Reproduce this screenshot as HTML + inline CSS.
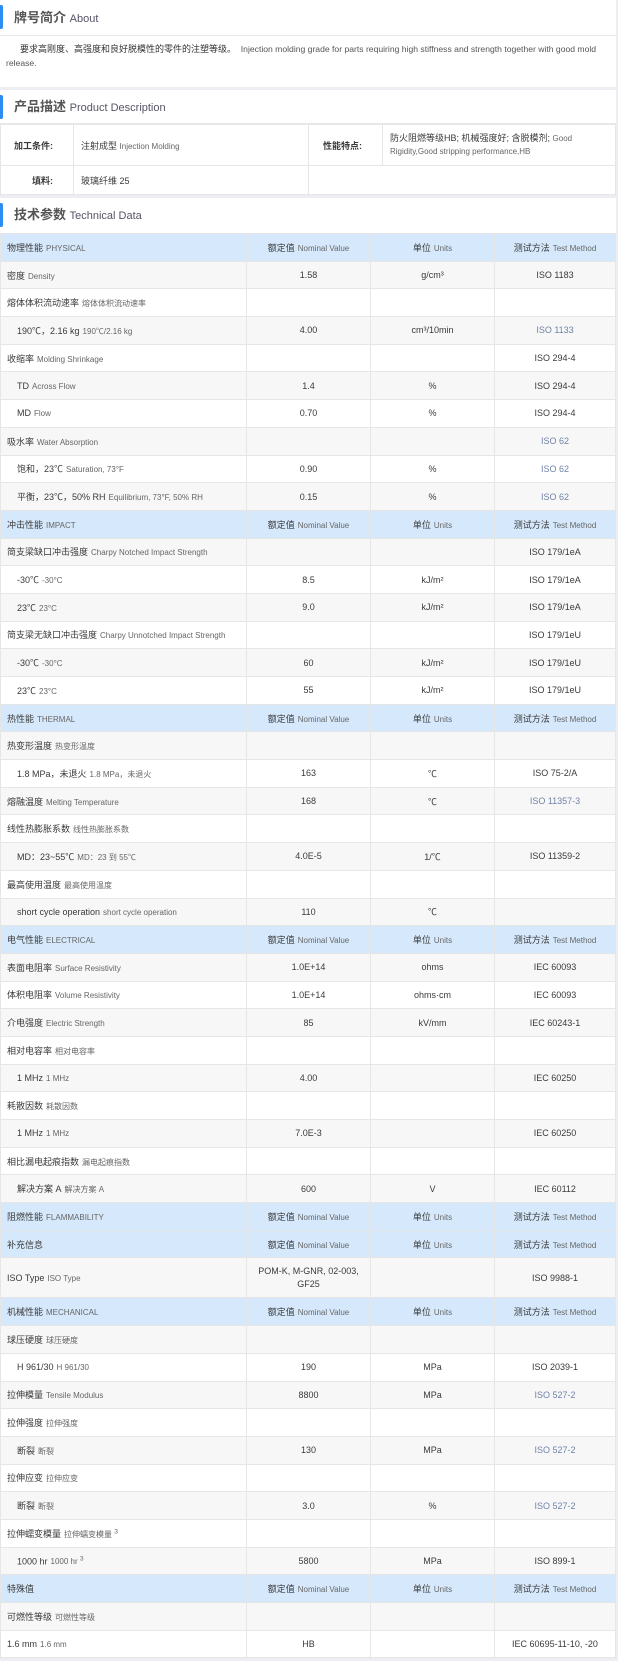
<!DOCTYPE html>
<html><head><meta charset="utf-8">
<style>
*{margin:0;padding:0;box-sizing:border-box}
body{width:618px;height:1661px;background:#eceef1;font-family:"Liberation Sans","Noto Sans CJK SC",sans-serif;color:#333;overflow:hidden}
.box{background:#fff;border-right:2px solid #eceef1}
.h{position:relative;height:36px;border-bottom:1px solid #e8e8e8;padding-left:14px;line-height:35px;font-size:13px;font-weight:bold;color:#555;background:#fff}
.h:before{content:"";position:absolute;left:0;top:5px;width:3px;height:24px;background:#2d8cf0;border-radius:0 2px 2px 0}
.h small{font-size:11px;font-weight:normal;color:#556;}
.about{height:51px;padding:6px 6px 0 6px;font-size:8.6px;line-height:14px;color:#555;text-indent:14px}
.about b{font-weight:normal;color:#333;font-size:9px}
table{border-collapse:collapse;width:616px;table-layout:fixed;background:#fff}
td{border:1px solid #e6e6e6;font-size:9px;color:#3a3a3a;vertical-align:middle}
.d td{font-size:9px}
.d .l{text-align:right;padding-right:20px;font-weight:bold}
.d .v{padding-left:7px}
.d span{color:#666;font-size:8px}
.t tr{height:27.7px}
.t td{text-align:center;padding:0 3px}
.t td:first-child{text-align:left;padding-left:6px}
.t tr.g td{background:#f7f7f7}
.t tr.hd td{background:#d6e9fc}
.t span{color:#666;font-size:8px;margin-left:3px}
.t td.s{padding-left:16px}
.t .lk{color:#7183a8}
.gap{height:3px;background:#eceef1}
</style></head><body>
<div class="box">
<div class="h">牌号简介 <small>About</small></div>
<div class="about"><b>要求高刚度、高强度和良好脱模性的零件的注塑等级。</b>&nbsp; Injection molding grade for parts requiring high stiffness and strength together with good mold release.</div>
</div>
<div class="gap"></div>
<div class="box">
<div class="h" style="height:34px;line-height:33px">产品描述 <small>Product Description</small></div>
<table class="d">
<colgroup><col style="width:73px"><col style="width:235px"><col style="width:74px"><col></colgroup>
<tr style="height:41px"><td class="l">加工条件:</td><td class="v">注射成型 <span>Injection Molding</span></td><td class="l">性能特点:</td><td class="v" style="line-height:13px">防火阻燃等级HB; 机械强度好; 含脱模剂; <span>Good Rigidity,Good stripping performance,HB</span></td></tr>
<tr style="height:29px"><td class="l">填料:</td><td class="v">玻璃纤维 25</td><td colspan="2"></td></tr>
</table>
</div>
<div class="gap"></div>
<div class="box">
<div class="h" style="height:35px;line-height:34px;border-bottom:none">技术参数 <small>Technical Data</small></div>
<table class="t">
<colgroup><col style="width:246px"><col style="width:124px"><col style="width:124px"><col></colgroup>
<tr class="hd"><td>物理性能<span>PHYSICAL</span></td><td>额定值<span>Nominal Value</span></td><td>单位<span>Units</span></td><td>测试方法<span>Test Method</span></td></tr>
<tr class="g"><td>密度<span>Density</span></td><td>1.58</td><td>g/cm³</td><td>ISO 1183</td></tr>
<tr><td>熔体体积流动速率<span>熔体体积流动速率</span></td><td></td><td></td><td></td></tr>
<tr class="g"><td class="s">190℃，2.16 kg<span>190℃/2.16 kg</span></td><td>4.00</td><td>cm³/10min</td><td class="lk">ISO 1133</td></tr>
<tr><td>收缩率<span>Molding Shrinkage</span></td><td></td><td></td><td>ISO 294-4</td></tr>
<tr class="g"><td class="s">TD<span>Across Flow</span></td><td>1.4</td><td>%</td><td>ISO 294-4</td></tr>
<tr><td class="s">MD<span>Flow</span></td><td>0.70</td><td>%</td><td>ISO 294-4</td></tr>
<tr class="g"><td>吸水率<span>Water Absorption</span></td><td></td><td></td><td class="lk">ISO 62</td></tr>
<tr><td class="s">饱和，23℃<span>Saturation, 73°F</span></td><td>0.90</td><td>%</td><td class="lk">ISO 62</td></tr>
<tr class="g"><td class="s">平衡，23℃，50% RH<span>Equilibrium, 73°F, 50% RH</span></td><td>0.15</td><td>%</td><td class="lk">ISO 62</td></tr>
<tr class="hd"><td>冲击性能<span>IMPACT</span></td><td>额定值<span>Nominal Value</span></td><td>单位<span>Units</span></td><td>测试方法<span>Test Method</span></td></tr>
<tr class="g"><td>简支梁缺口冲击强度<span>Charpy Notched Impact Strength</span></td><td></td><td></td><td>ISO 179/1eA</td></tr>
<tr><td class="s">-30℃<span>-30°C</span></td><td>8.5</td><td>kJ/m²</td><td>ISO 179/1eA</td></tr>
<tr class="g"><td class="s">23℃<span>23°C</span></td><td>9.0</td><td>kJ/m²</td><td>ISO 179/1eA</td></tr>
<tr><td>简支梁无缺口冲击强度<span>Charpy Unnotched Impact Strength</span></td><td></td><td></td><td>ISO 179/1eU</td></tr>
<tr class="g"><td class="s">-30℃<span>-30°C</span></td><td>60</td><td>kJ/m²</td><td>ISO 179/1eU</td></tr>
<tr><td class="s">23℃<span>23°C</span></td><td>55</td><td>kJ/m²</td><td>ISO 179/1eU</td></tr>
<tr class="hd"><td>热性能<span>THERMAL</span></td><td>额定值<span>Nominal Value</span></td><td>单位<span>Units</span></td><td>测试方法<span>Test Method</span></td></tr>
<tr class="g"><td>热变形温度<span>热变形温度</span></td><td></td><td></td><td></td></tr>
<tr><td class="s">1.8 MPa，未退火<span>1.8 MPa，未退火</span></td><td>163</td><td>℃</td><td>ISO 75-2/A</td></tr>
<tr class="g"><td>熔融温度<span>Melting Temperature</span></td><td>168</td><td>℃</td><td class="lk">ISO 11357-3</td></tr>
<tr><td>线性热膨胀系数<span>线性热膨胀系数</span></td><td></td><td></td><td></td></tr>
<tr class="g"><td class="s">MD：23~55℃<span>MD：23 到 55℃</span></td><td>4.0E-5</td><td>1/℃</td><td>ISO 11359-2</td></tr>
<tr><td>最高使用温度<span>最高使用温度</span></td><td></td><td></td><td></td></tr>
<tr class="g"><td class="s">short cycle operation<span>short cycle operation</span></td><td>110</td><td>℃</td><td></td></tr>
<tr class="hd"><td>电气性能<span>ELECTRICAL</span></td><td>额定值<span>Nominal Value</span></td><td>单位<span>Units</span></td><td>测试方法<span>Test Method</span></td></tr>
<tr class="g"><td>表面电阻率<span>Surface Resistivity</span></td><td>1.0E+14</td><td>ohms</td><td>IEC 60093</td></tr>
<tr><td>体积电阻率<span>Volume Resistivity</span></td><td>1.0E+14</td><td>ohms·cm</td><td>IEC 60093</td></tr>
<tr class="g"><td>介电强度<span>Electric Strength</span></td><td>85</td><td>kV/mm</td><td>IEC 60243-1</td></tr>
<tr><td>相对电容率<span>相对电容率</span></td><td></td><td></td><td></td></tr>
<tr class="g"><td class="s">1 MHz<span>1 MHz</span></td><td>4.00</td><td></td><td>IEC 60250</td></tr>
<tr><td>耗散因数<span>耗散因数</span></td><td></td><td></td><td></td></tr>
<tr class="g"><td class="s">1 MHz<span>1 MHz</span></td><td>7.0E-3</td><td></td><td>IEC 60250</td></tr>
<tr><td>相比漏电起痕指数<span>漏电起痕指数</span></td><td></td><td></td><td></td></tr>
<tr class="g"><td class="s">解决方案 A<span>解决方案 A</span></td><td>600</td><td>V</td><td>IEC 60112</td></tr>
<tr class="hd"><td>阻燃性能<span>FLAMMABILITY</span></td><td>额定值<span>Nominal Value</span></td><td>单位<span>Units</span></td><td>测试方法<span>Test Method</span></td></tr>
<tr class="hd"><td>补充信息</td><td>额定值<span>Nominal Value</span></td><td>单位<span>Units</span></td><td>测试方法<span>Test Method</span></td></tr>
<tr class="g" style="height:40px"><td>ISO Type<span>ISO Type</span></td><td style="line-height:13px">POM-K, M-GNR, 02-003, GF25</td><td></td><td>ISO 9988-1</td></tr>
<tr class="hd"><td>机械性能<span>MECHANICAL</span></td><td>额定值<span>Nominal Value</span></td><td>单位<span>Units</span></td><td>测试方法<span>Test Method</span></td></tr>
<tr class="g"><td>球压硬度<span>球压硬度</span></td><td></td><td></td><td></td></tr>
<tr><td class="s">H 961/30<span>H 961/30</span></td><td>190</td><td>MPa</td><td>ISO 2039-1</td></tr>
<tr class="g"><td>拉伸模量<span>Tensile Modulus</span></td><td>8800</td><td>MPa</td><td class="lk">ISO 527-2</td></tr>
<tr><td>拉伸强度<span>拉伸强度</span></td><td></td><td></td><td></td></tr>
<tr class="g"><td class="s">断裂<span>断裂</span></td><td>130</td><td>MPa</td><td class="lk">ISO 527-2</td></tr>
<tr><td>拉伸应变<span>拉伸应变</span></td><td></td><td></td><td></td></tr>
<tr class="g"><td class="s">断裂<span>断裂</span></td><td>3.0</td><td>%</td><td class="lk">ISO 527-2</td></tr>
<tr><td>拉伸蠕变模量<span>拉伸蠕变模量 <sup>3</sup></span></td><td></td><td></td><td></td></tr>
<tr class="g"><td class="s">1000 hr<span>1000 hr <sup>3</sup></span></td><td>5800</td><td>MPa</td><td>ISO 899-1</td></tr>
<tr class="hd"><td>特殊值</td><td>额定值<span>Nominal Value</span></td><td>单位<span>Units</span></td><td>测试方法<span>Test Method</span></td></tr>
<tr class="g"><td>可燃性等级<span>可燃性等级</span></td><td></td><td></td><td></td></tr>
<tr><td>1.6 mm<span>1.6 mm</span></td><td>HB</td><td></td><td>IEC 60695-11-10, -20</td></tr>
</table>
</div>
</body></html>
